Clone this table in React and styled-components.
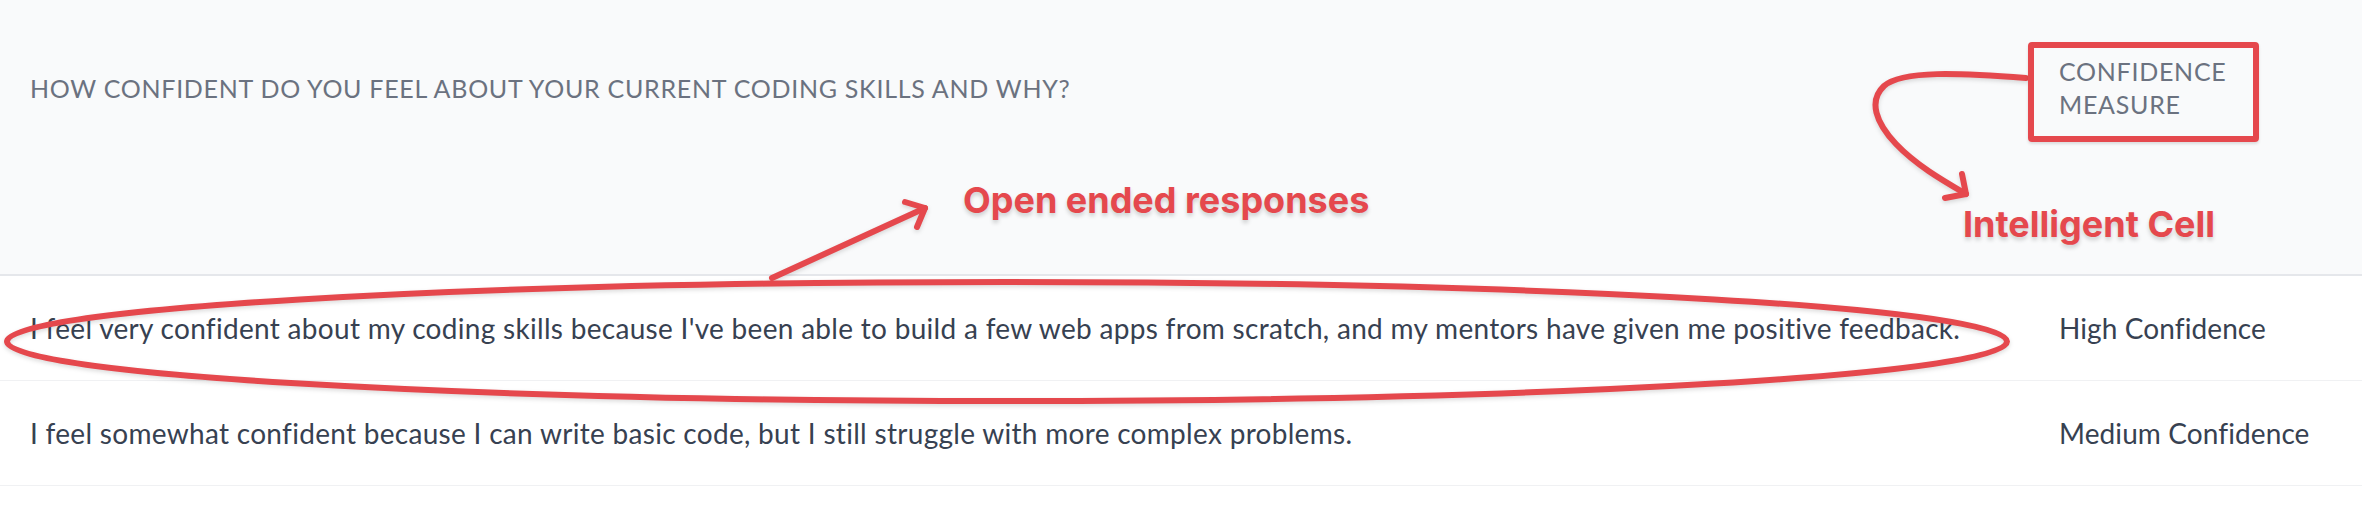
import React from "react";
import styled, { createGlobalStyle } from "styled-components";

const GlobalStyle = createGlobalStyle`
  html, body {
    margin: 0;
    padding: 0;
    background: #ffffff;
  }
  * {
    box-sizing: border-box;
  }
`;

const rows = [
  {
    answer:
      "I feel very confident about my coding skills because I've been able to build a few web apps from scratch, and my mentors have given me positive feedback.",
    measure: "High Confidence",
  },
  {
    answer:
      "I feel somewhat confident because I can write basic code, but I still struggle with more complex problems.",
    measure: "Medium Confidence",
  },
];

export default function App() {
  return (
    <>
      <GlobalStyle />
      <Page>
        <Table>
          <HeaderRow>
            <HeaderCell>
              How confident do you feel about your current coding skills and why?
            </HeaderCell>
            <HeaderCell>
              Confidence
              <br />
              Measure
            </HeaderCell>
          </HeaderRow>
          {rows.map(row => (
            <BodyRow key={row.measure}>
              <BodyCell $wide>{row.answer}</BodyCell>
              <BodyCell>{row.measure}</BodyCell>
            </BodyRow>
          ))}
        </Table>

        {/* annotation layer drawn over the table */}
        <Strokes viewBox="0 0 2362 526" width="2362" height="526">
          <ellipse cx="1007" cy="341.5" rx="1000" ry="59.5" />
          <path d="M772 278 L925 208" />
          <path d="M905 202 L925 208 L917 227" />
          <path d="M2026 78 C1960 73, 1902 70, 1884 86 C1868 101, 1876 123, 1896 144 C1916 165, 1942 180, 1966 194" />
          <path d="M1962 174 L1966 194 L1945 198" />
        </Strokes>
        <HighlightBox />
        <Label $left={963} $top={182} $size={36}>
          Open ended responses
        </Label>
        <Label $left={1963} $top={206} $size={36}>
          Intelligent Cell
        </Label>
      </Page>
    </>
  );
}

const Page = styled.div`
  position: relative;
  width: 2362px;
  height: 526px;
  background: #ffffff;
  overflow: hidden;
`;

const Table = styled.div`
  display: flex;
  flex-direction: column;
  width: 100%;
`;

const HeaderRow = styled.div`
  display: grid;
  grid-template-columns: 1fr 333px;
  align-items: center;
  height: 276px;
  padding-bottom: 98px;
  background: #f9fafb;
  border-bottom: 2px solid #e5e7eb;
`;

const HeaderCell = styled.div`
  padding: 0 30px;
  font-family: Lato, "Open Sans", sans-serif;
  font-size: 25px;
  line-height: 33px;
  letter-spacing: 0.72px;
  text-transform: uppercase;
  color: #6b7280;
  white-space: nowrap;
`;

const BodyRow = styled.div`
  display: grid;
  grid-template-columns: 1fr 333px;
  align-items: center;
  height: 105px;
  border-bottom: 1.5px solid #f0f1f3;
`;

const BodyCell = styled.div`
  padding: 0 30px;
  font-family: Lato, "Open Sans", sans-serif;
  font-size: 28px;
  line-height: 36px;
  letter-spacing: ${p => (p.$wide ? "0.3px" : "0.1px")};
  color: #374151;
  white-space: nowrap;
`;

const Strokes = styled.svg`
  position: absolute;
  top: 0;
  left: 0;
  fill: none;
  stroke: #e5484d;
  stroke-width: 6;
  stroke-linecap: round;
  stroke-linejoin: round;
  filter: drop-shadow(0 2px 2px rgba(0, 0, 0, 0.14));
  pointer-events: none;
`;

const HighlightBox = styled.div`
  position: absolute;
  left: 2028px;
  top: 42px;
  width: 231px;
  height: 100px;
  border: 6px solid #e5484d;
  border-radius: 4px;
  box-shadow: 0 2px 3px rgba(0, 0, 0, 0.12);
`;

const Label = styled.span`
  position: absolute;
  left: ${p => p.$left}px;
  top: ${p => p.$top}px;
  font-family: Inter, Roboto, sans-serif;
  font-weight: 700;
  font-size: ${p => p.$size}px;
  line-height: 1;
  letter-spacing: 0;
  color: #e5484d;
  white-space: nowrap;
  text-shadow: 0 3px 4px rgba(0, 0, 0, 0.18);
`;
